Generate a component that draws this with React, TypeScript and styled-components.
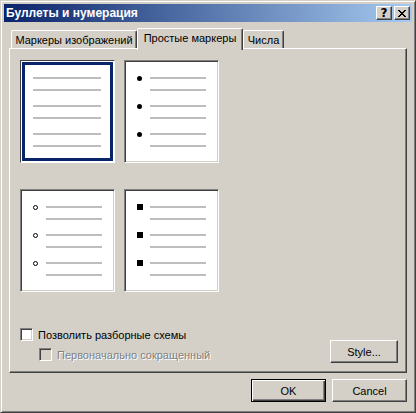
import React from 'react'
import styled, { createGlobalStyle, css } from 'styled-components'

const face = '#d4d0c8'

const GlobalStyle = createGlobalStyle`
  html, body {
    margin: 0;
    padding: 0;
    background: ${face};
  }
  body {
    font-family: 'Liberation Sans', Arial, sans-serif;
    font-size: 11px;
    color: #000;
  }
  * {
    box-sizing: border-box;
  }
`

const raised = css`
  border: 1px solid;
  border-color: #fff #404040 #404040 #fff;
  box-shadow: inset -1px -1px 0 #808080;
`

const sunken = css`
  border: 1px solid;
  border-color: #808080 #fff #fff #808080;
  box-shadow: inset 1px 1px 0 #404040, inset -1px -1px 0 ${face};
`

const Window = styled.div`
  width: 416px;
  height: 413px;
  display: flex;
  flex-direction: column;
  background: ${face};
  border: 1px solid;
  border-color: ${face} #404040 #404040 ${face};
  box-shadow: inset 1px 1px 0 #fff, inset -1px -1px 0 #808080;
  padding: 3px;
`

const TitleBar = styled.div`
  height: 18px;
  display: flex;
  align-items: center;
  padding: 0 2px;
  background: linear-gradient(to right, #0a246a, #a6caf0);
  color: #fff;
  font-weight: bold;
  font-size: 12px;
`

const TitleText = styled.span`
  flex: 1;
  white-space: nowrap;
`

const CaptionButtons = styled.div`
  display: flex;
  gap: 2px;
`

const CaptionButton = styled.div`
  width: 16px;
  height: 14px;
  background: ${face};
  ${raised};
  display: flex;
  align-items: center;
  justify-content: center;
  color: #000;
  font-family: 'DejaVu Sans', sans-serif;
  font-size: 12px;
  font-weight: bold;
  line-height: 1;
`

const Body = styled.div`
  flex: 1;
  display: flex;
  flex-direction: column;
  padding: 6px 5px 7px 5px;
`

const TabRow = styled.div`
  display: flex;
  align-items: flex-end;
  height: 20px;
  padding-left: 2px;
  position: relative;
  z-index: 1;
`

const Tab = styled.div<{ $w: number; $active?: boolean }>`
  width: ${p => p.$w}px;
  height: ${p => (p.$active ? 22 : 18)}px;
  margin-bottom: ${p => (p.$active ? -2 : 0)}px;
  padding-bottom: ${p => (p.$active ? 3 : 0)}px;
  background: ${face};
  border-top: 1px solid #fff;
  border-left: 1px solid #fff;
  border-right: 1px solid #404040;
  box-shadow: inset -1px 0 0 #808080;
  border-radius: 2px 2px 0 0;
  display: flex;
  align-items: center;
  justify-content: center;
  white-space: nowrap;
`

const Panel = styled.div`
  height: 325px;
  ${raised};
  display: flex;
  flex-direction: column;
  padding: 11px 8px 9px 10px;
`

const BoxGrid = styled.div`
  display: grid;
  grid-template-columns: repeat(2, 95px);
  column-gap: 9px;
  row-gap: 26px;
`

const BulletBox = styled.div<{ $selected?: boolean; $plain?: boolean }>`
  width: 95px;
  height: 103px;
  background: #fff;
  ${p =>
    p.$selected
      ? css`
          border: 1px solid;
          border-color: #404040 #fff #fff #404040;
          box-shadow: inset 0 0 0 1px #fff, inset 0 0 0 4px #0a246a;
        `
      : sunken};
  padding: 11px 0 0 ${p => (p.$plain ? 12 : 10)}px;
  display: flex;
  flex-direction: column;
  gap: 4px;
`

const Group = styled.div`
  display: flex;
  flex-direction: column;
`

const LineRow = styled.div`
  height: 12px;
  display: flex;
  align-items: center;
`

const Slot = styled.div`
  width: 9px;
  margin-right: 6px;
  display: flex;
  align-items: center;
  justify-content: center;
`

const Line = styled.div<{ $w: number }>`
  width: ${p => p.$w}px;
  height: 2px;
  background: #bdbdbd;
`

type Kind = 'none' | 'dot' | 'circle' | 'square'

const Marker = styled.div<{ $kind: Kind }>`
  ${p =>
    p.$kind === 'dot' &&
    css`
      width: 5px;
      height: 5px;
      border-radius: 50%;
      background: #000;
    `}
  ${p =>
    p.$kind === 'circle' &&
    css`
      width: 5px;
      height: 5px;
      border-radius: 50%;
      border: 1px solid #000;
    `}
  ${p =>
    p.$kind === 'square' &&
    css`
      width: 6px;
      height: 6px;
      background: #000;
    `}
`

const Footer = styled.div`
  margin-top: auto;
  display: flex;
  justify-content: space-between;
  align-items: flex-end;
`

const Checks = styled.div`
  display: flex;
  flex-direction: column;
  gap: 7px;
  margin-bottom: 2px;
`

const CheckRow = styled.div<{ $indent?: number; $disabled?: boolean }>`
  display: flex;
  align-items: center;
  height: 13px;
  margin-left: ${p => p.$indent || 0}px;
  color: ${p => (p.$disabled ? '#808080' : '#000')};
  text-shadow: ${p => (p.$disabled ? '1px 1px 0 #fff' : 'none')};
`

const CheckBox = styled.div<{ $disabled?: boolean }>`
  width: 13px;
  height: 13px;
  ${sunken};
  background: ${p => (p.$disabled ? face : '#fff')};
  margin-right: 5px;
`

const Button = styled.div<{ $w: number; $default?: boolean }>`
  width: ${p => p.$w}px;
  height: 23px;
  background: ${face};
  display: flex;
  align-items: center;
  justify-content: center;
  ${p =>
    p.$default
      ? css`
          border: 1px solid #000;
          box-shadow: inset 1px 1px 0 #fff, inset -1px -1px 0 #404040, inset -2px -2px 0 #808080;
        `
      : raised};
`

const ButtonRow = styled.div`
  display: flex;
  justify-content: flex-end;
  gap: 6px;
  margin-top: 6px;
`

const boxes: { kind: Kind; selected?: boolean }[] = [
  { kind: 'none', selected: true },
  { kind: 'dot' },
  { kind: 'circle' },
  { kind: 'square' },
]

const Preview: React.FC<{ kind: Kind; selected?: boolean }> = ({ kind, selected }) => {
  const plain = kind === 'none'
  return (
    <BulletBox $selected={selected} $plain={plain}>
      {[0, 1, 2].map(i => (
        <Group key={i}>
          <LineRow>
            {!plain && (
              <Slot>
                <Marker $kind={kind} />
              </Slot>
            )}
            <Line $w={plain ? 68 : 56} />
          </LineRow>
          <LineRow>
            {!plain && <Slot />}
            <Line $w={plain ? 68 : 56} />
          </LineRow>
        </Group>
      ))}
    </BulletBox>
  )
}

const App: React.FC = () => {
  return (
    <>
      <GlobalStyle />
      <Window>
        <TitleBar>
          <TitleText>Буллеты и нумерация</TitleText>
          <CaptionButtons>
            <CaptionButton>?</CaptionButton>
            <CaptionButton>
              <svg width="8" height="7" viewBox="0 0 8 7" shapeRendering="crispEdges">
                <path d="M0 0h2v1h1v1h2v-1h1v-1h2v1h-1v1h-1v1h-1v1h1v1h1v1h1v1h-2v-1h-1v-1h-2v1h-1v1h-2v-1h1v-1h1v-1h1v-1h-1v-1h-1v-1h-1z" fill="#000" />
              </svg>
            </CaptionButton>
          </CaptionButtons>
        </TitleBar>
        <Body>
          <TabRow>
            <Tab $w={126}>Маркеры изображений</Tab>
            <Tab $w={106} $active>
              Простые маркеры
            </Tab>
            <Tab $w={41}>Числа</Tab>
          </TabRow>
          <Panel>
            <BoxGrid>
              {boxes.map((b, i) => (
                <Preview key={i} kind={b.kind} selected={b.selected} />
              ))}
            </BoxGrid>
            <Footer>
              <Checks>
                <CheckRow>
                  <CheckBox />
                  Позволить разборные схемы
                </CheckRow>
                <CheckRow $indent={19} $disabled>
                  <CheckBox $disabled />
                  Первоначально сокращенный
                </CheckRow>
              </Checks>
              <Button $w={68}>Style...</Button>
            </Footer>
          </Panel>
          <ButtonRow>
            <Button $w={75} $default>
              OK
            </Button>
            <Button $w={75}>Cancel</Button>
          </ButtonRow>
        </Body>
      </Window>
    </>
  )
}

export default App
